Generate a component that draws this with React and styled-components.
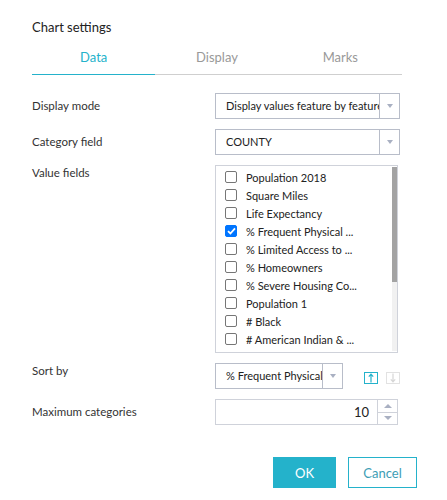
import React from 'react'
import styled, { createGlobalStyle } from 'styled-components'

const GlobalStyle = createGlobalStyle`
  body {
    margin: 0;
    background: #fff;
    font-family: Lato, "Open Sans", sans-serif;
    color: #333;
  }
`

const CYAN = '#24b2cb'

const valueFields = [
  { name: 'Population 2018', checked: false },
  { name: 'Square Miles', checked: false },
  { name: 'Life Expectancy', checked: false },
  { name: '% Frequent Physical ...', checked: true },
  { name: '% Limited Access to ...', checked: false },
  { name: '% Homeowners', checked: false },
  { name: '% Severe Housing Co...', checked: false },
  { name: 'Population 1', checked: false },
  { name: '# Black', checked: false },
  { name: '# American Indian & ...', checked: false },
]

const Dialog = styled.div`
  width: 447px;
  height: 500px;
  box-sizing: border-box;
  padding: 18px 45px 0 32px;
`

const Title = styled.div`
  font-size: 13px;
  line-height: 18px;
  color: #222;
`

const Tabs = styled.div`
  display: grid;
  grid-template-columns: repeat(3, 1fr);
  width: 370px;
  border-bottom: 1px solid #cfcfcf;
`

const Tab = styled.div`
  text-align: center;
  font-size: 13px;
  line-height: 18px;
  padding: 12px 0 8px;
  color: ${p => (p.$active ? CYAN : '#999')};
  box-shadow: ${p => (p.$active ? `0 1px 0 ${CYAN}` : 'none')};
`

const Form = styled.div`
  margin-top: 18px;
  display: flex;
  flex-direction: column;
  gap: 10px;
`

const Row = styled.div`
  display: flex;
  align-items: ${p => p.$align || 'center'};
`

const Label = styled.div`
  width: 183px;
  font-size: 11.5px;
  line-height: 16px;
  color: #333;
  padding-top: ${p => p.$top || 0}px;
`

const Select = styled.div`
  width: ${p => p.$width || 185}px;
  height: 26px;
  box-sizing: border-box;
  border: 1px solid #b8bdc9;
  display: flex;
  align-items: stretch;
`

const SelectText = styled.div`
  flex: 1;
  overflow: hidden;
  white-space: nowrap;
  font-size: 11px;
  line-height: 24px;
  padding-left: 10px;
  color: #222;
`

const DropButton = styled.div`
  width: 19px;
  border-left: 1px solid #b8bdc9;
  display: flex;
  align-items: center;
  justify-content: center;
`

const Caret = styled.span`
  width: 0;
  height: 0;
  border-left: 3.5px solid transparent;
  border-right: 3.5px solid transparent;
  border-top: 4px solid #a9b0c2;
`

const ListBox = styled.div`
  width: 183px;
  height: 188px;
  box-sizing: border-box;
  border: 1px solid #cfd2da;
  display: flex;
`

const Items = styled.div`
  flex: 1;
  padding: 2px 0 0 9px;
`

const Item = styled.div`
  display: flex;
  align-items: center;
  height: 18px;
  font-size: 11px;
  color: #222;
`

const Box = styled.span`
  width: 12px;
  height: 12px;
  box-sizing: border-box;
  border-radius: 2px;
  margin-right: 9px;
  display: flex;
  align-items: center;
  justify-content: center;
  border: 1px solid ${p => (p.$checked ? '#0075ff' : '#767676')};
  background: ${p => (p.$checked ? '#0075ff' : '#fff')};
`

const Track = styled.div`
  width: 5px;
  margin: 1px 0 1px;
  background: #f1f1f1;
  display: flex;
  flex-direction: column;
`

const Thumb = styled.div`
  height: 115px;
  background: #a3a3a3;
`

const SortButtons = styled.div`
  display: flex;
  gap: 8px;
  margin: 9px 0 0 21px;
`

const SortButton = styled.div`
  width: 14px;
  height: 12px;
  box-sizing: border-box;
  border: 1px solid ${p => (p.$active ? CYAN : '#e2e2e2')};
  display: flex;
  align-items: center;
  justify-content: center;
`

const NumberBox = styled.div`
  width: 183px;
  height: 26px;
  box-sizing: border-box;
  border: 1px solid #cfd2da;
  display: flex;
`

const NumberValue = styled.div`
  flex: 1;
  text-align: right;
  font-size: 13px;
  line-height: 24px;
  padding-right: 8px;
  color: #222;
`

const Spinner = styled.div`
  width: 19px;
  border-left: 1px solid #cfd2da;
  display: flex;
  flex-direction: column;
`

const SpinHalf = styled.div`
  flex: 1;
  display: flex;
  align-items: center;
  justify-content: center;
  border-top: ${p => (p.$bottom ? '1px solid #cfd2da' : 'none')};
`

const SpinArrow = styled.span`
  width: 0;
  height: 0;
  border-left: 4px solid transparent;
  border-right: 4px solid transparent;
  ${p => (p.$up ? 'border-bottom: 4px solid #a9b0c2;' : 'border-top: 4px solid #a9b0c2;')}
`

const Footer = styled.div`
  display: flex;
  justify-content: flex-end;
  gap: 12px;
  margin-top: 32px;
  width: 385px;
`

const Button = styled.button`
  height: 31px;
  box-sizing: border-box;
  font-family: inherit;
  font-size: 13px;
  padding: 0;
  width: ${p => p.$width}px;
  border: 1px solid ${CYAN};
  background: ${p => (p.$primary ? CYAN : '#fff')};
  color: ${p => (p.$primary ? '#fff' : '#3d9db5')};
`

const Check = () => (
  <svg width="9" height="8" viewBox="0 0 9 8">
    <path d="M1 4.2 L3.4 6.5 L8 1.3" stroke="#fff" strokeWidth="1.8" fill="none" />
  </svg>
)

const Arrow = ({ up, color }) => (
  <svg width="6" height="10" viewBox="0 0 6 10">
    {up ? (
      <path d="M3 9.5 V1.5 M0.8 3.6 L3 1.2 L5.2 3.6" stroke={color} strokeWidth="1.2" fill="none" />
    ) : (
      <path d="M3 0.5 V8.5 M0.8 6.4 L3 8.8 L5.2 6.4" stroke={color} strokeWidth="1.2" fill="none" />
    )}
  </svg>
)

const App = () => {
  return (
    <Dialog>
      <GlobalStyle />
      <Title>Chart settings</Title>
      <Tabs>
        <Tab $active>Data</Tab>
        <Tab>Display</Tab>
        <Tab>Marks</Tab>
      </Tabs>

      <Form>
        <Row>
          <Label>Display mode</Label>
          <Select>
            <SelectText>Display values feature by feature</SelectText>
            <DropButton><Caret /></DropButton>
          </Select>
        </Row>

        <Row>
          <Label>Category field</Label>
          <Select>
            <SelectText>COUNTY</SelectText>
            <DropButton><Caret /></DropButton>
          </Select>
        </Row>

        <Row $align="flex-start">
          <Label $top={0}>Value fields</Label>
          <ListBox>
            <Items>
              {valueFields.map((f, i) => (
                <Item key={i}>
                  <Box $checked={f.checked}>{f.checked && <Check />}</Box>
                  {f.name}
                </Item>
              ))}
            </Items>
            <Track><Thumb /></Track>
          </ListBox>
        </Row>

        <Row $align="flex-start">
          <Label $top={0}>Sort by</Label>
          <Select $width={128}>
            <SelectText>% Frequent Physical</SelectText>
            <DropButton><Caret /></DropButton>
          </Select>
          <SortButtons>
            <SortButton $active><Arrow up color={CYAN} /></SortButton>
            <SortButton><Arrow color="#d6d6d6" /></SortButton>
          </SortButtons>
        </Row>

        <Row>
          <Label>Maximum categories</Label>
          <NumberBox>
            <NumberValue>10</NumberValue>
            <Spinner>
              <SpinHalf><SpinArrow $up /></SpinHalf>
              <SpinHalf $bottom><SpinArrow /></SpinHalf>
            </Spinner>
          </NumberBox>
        </Row>
      </Form>

      <Footer>
        <Button $primary $width={63}>OK</Button>
        <Button $width={69}>Cancel</Button>
      </Footer>
    </Dialog>
  )
}

export default App
